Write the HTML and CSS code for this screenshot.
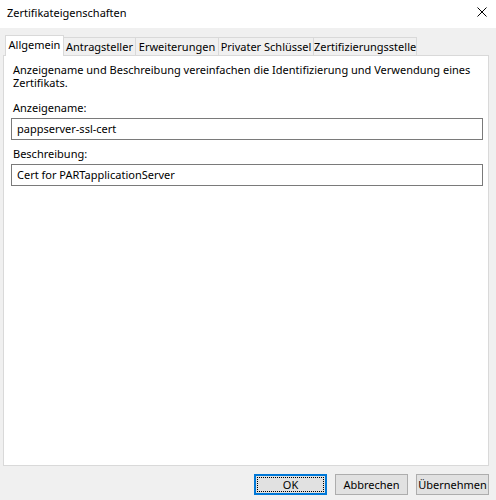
FILE: index.html
```html
<!DOCTYPE html>
<html lang="de">
<head>
<meta charset="utf-8">
<title>Zertifikateigenschaften</title>
<link rel="stylesheet" href="styles.css">
</head>
<body>
<div class="window">
  <div class="titlebar">
    <span class="title">Zertifikateigenschaften</span>
    <span class="close">
      <svg width="10" height="10" viewBox="0 0 10 10"><path d="M0.5 0.5 L9.5 9.5 M9.5 0.5 L0.5 9.5" stroke="#000" stroke-width="1" fill="none"/></svg>
    </span>
  </div>
  <div class="tabs">
    <div class="tab tab-active tab-1">Allgemein</div>
    <div class="tab tab-2">Antragsteller</div>
    <div class="tab tab-3">Erweiterungen</div>
    <div class="tab tab-4">Privater Schlüssel</div>
    <div class="tab tab-5">Zertifizierungsstelle</div>
  </div>
  <div class="panel">
    <p class="desc">Anzeigename und Beschreibung vereinfachen die Identifizierung und Verwendung eines Zertifikats.</p>
    <div class="label label-first">Anzeigename:</div>
    <div class="field">pappserver-ssl-cert</div>
    <div class="label label-second">Beschreibung:</div>
    <div class="field">Cert for PARTapplicationServer</div>
  </div>
  <div class="buttons">
    <div class="btn btn-default"><span class="focus">OK</span></div>
    <div class="btn">Abbrechen</div>
    <div class="btn">Übernehmen</div>
  </div>
</div>
</body>
</html>
```
FILE: styles.css
```css
html, body {
  margin: 0;
  padding: 0;
}
body {
  width: 496px;
  height: 500px;
  background: #f0f0f0;
  font-family: "Noto Sans", "Liberation Sans", sans-serif;
  font-size: 11px;
  color: #000;
  overflow: hidden;
}
.window {
  display: flex;
  flex-direction: column;
  height: 500px;
}
.titlebar {
  height: 28px;
  background: #fff;
  display: flex;
  align-items: flex-start;
  justify-content: space-between;
  box-sizing: border-box;
  padding: 5px 9px 0 7px;
  line-height: 15px;
}
.close {
  display: flex;
  padding-top: 2px;
}
.close svg {
  display: block;
}
.tabs {
  display: flex;
  align-items: flex-end;
  height: 20px;
  margin-top: 7px;
  padding-left: 5px;
  position: relative;
  z-index: 1;
}
.tab {
  box-sizing: border-box;
  height: 18px;
  border: 1px solid #d9d9d9;
  border-bottom: none;
  margin-left: -1px;
  text-align: center;
  line-height: 17px;
  white-space: nowrap;
  background: #f0f0f0;
}
.tab-active {
  height: 21px;
  margin-left: 0;
  margin-bottom: -1px;
  background: #fff;
  line-height: 18px;
  padding-bottom: 2px;
}
.tab-1 { width: 59px; }
.tab-2 { width: 73px; }
.tab-3 { width: 84px; }
.tab-4 { width: 96px; }
.tab-5 { width: 104px; }
.panel {
  box-sizing: border-box;
  margin-left: 3px;
  width: 486px;
  height: 411px;
  background: #fff;
  border: 1px solid #d9d9d9;
  padding: 7px 5px 0 7px;
  display: flex;
  flex-direction: column;
}
.desc {
  margin: 0 0 0 2px;
  line-height: 13px;
  width: 470px;
}
.label {
  line-height: 13px;
  margin-left: 2px;
}
.label-first {
  margin-top: 12px;
}
.label-second {
  margin-top: 7px;
}
.field {
  box-sizing: border-box;
  margin-top: 4px;
  height: 22px;
  width: 472px;
  border: 1px solid #7a7a7a;
  padding-left: 5px;
  line-height: 20px;
  white-space: nowrap;
}
.buttons {
  display: flex;
  justify-content: flex-end;
  gap: 8px;
  padding: 0 7px 0 0;
  margin-top: 8px;
}
.btn {
  box-sizing: border-box;
  width: 73px;
  height: 21px;
  background: #e1e1e1;
  border: 1px solid #adadad;
  display: flex;
  align-items: center;
  justify-content: center;
  line-height: 16px;
}
.btn-default {
  border: 2px solid #0078d7;
  padding: 1px;
}
.focus {
  flex: 1;
  align-self: stretch;
  display: flex;
  align-items: center;
  justify-content: center;
  outline: 1px dotted #000;
  outline-offset: -1px;
}
```
